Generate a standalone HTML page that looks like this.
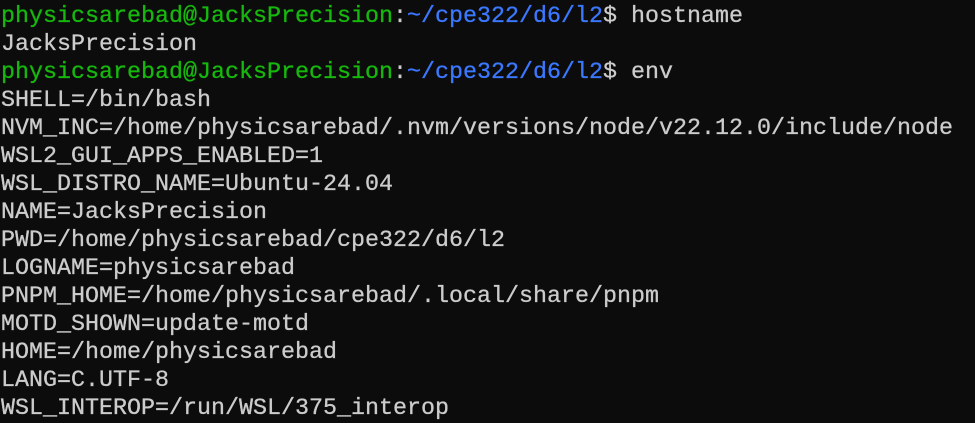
<!DOCTYPE html>
<html><head><style>
html,body{margin:0;padding:0;background:#0c0c0c;width:975px;height:423px;overflow:hidden}
pre{margin:0;padding:3px 0 0 1px;font-family:"Liberation Mono",monospace;font-size:23.33px;line-height:28px;color:#cccccc;white-space:pre;-webkit-text-stroke:0.3px}
.g{color:#16b80d}.b{color:#3b78ff}
</style></head><body><pre><span class="g">physicsarebad@JacksPrecision</span>:<span class="b">~/cpe322/d6/l2</span>$ hostname
JacksPrecision
<span class="g">physicsarebad@JacksPrecision</span>:<span class="b">~/cpe322/d6/l2</span>$ env
SHELL=/bin/bash
NVM_INC=/home/physicsarebad/.nvm/versions/node/v22.12.0/include/node
WSL2_GUI_APPS_ENABLED=1
WSL_DISTRO_NAME=Ubuntu-24.04
NAME=JacksPrecision
PWD=/home/physicsarebad/cpe322/d6/l2
LOGNAME=physicsarebad
PNPM_HOME=/home/physicsarebad/.local/share/pnpm
MOTD_SHOWN=update-motd
HOME=/home/physicsarebad
LANG=C.UTF-8
WSL_INTEROP=/run/WSL/375_interop</pre></body></html>
